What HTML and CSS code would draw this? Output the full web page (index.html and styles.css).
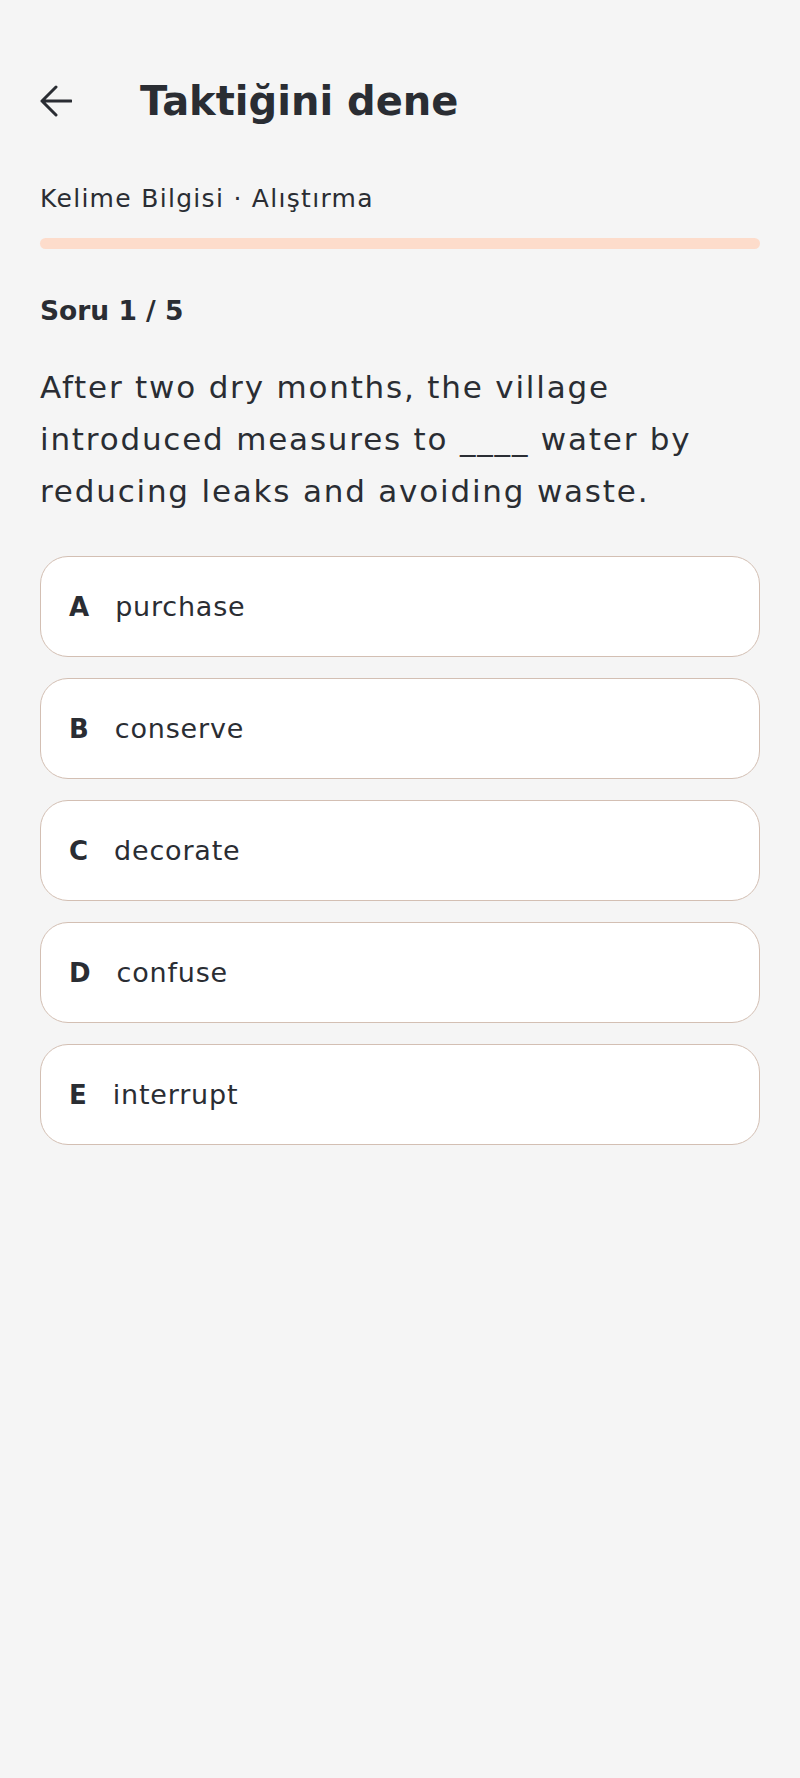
FILE: index.html
```html
<!DOCTYPE html>
<html lang="tr">
<head>
    <meta charset="UTF-8">
    <meta name="viewport" content="width=device-width, initial-scale=1.0">
    <title>Taktiğini dene</title>
    <link rel="stylesheet" href="styles.css">
</head>
<body>
    <div class="screen">
        <header class="topbar">
            <button class="back-btn" aria-label="Geri">
                <svg width="32" height="32" viewBox="0 0 32 32" fill="none" stroke="currentColor" stroke-width="3" stroke-linecap="round" stroke-linejoin="round">
                    <path d="M31 16H2M16 2L2 16l14 14"/>
                </svg>
            </button>
            <h1>Taktiğini dene</h1>
        </header>

        <p class="subtitle">Kelime Bilgisi · Alıştırma</p>
        <div class="progress"><div class="progress-fill" style="width: 0%"></div></div>

        <h2 class="counter">Soru 1 / 5</h2>
        <p class="question">After two dry months, the village introduced measures to ____ water by reducing leaks and avoiding waste.</p>

        <div class="options">
            <button class="option"><span class="option-key">A</span><span class="option-text">purchase</span></button>
            <button class="option"><span class="option-key">B</span><span class="option-text">conserve</span></button>
            <button class="option"><span class="option-key">C</span><span class="option-text">decorate</span></button>
            <button class="option"><span class="option-key">D</span><span class="option-text">confuse</span></button>
            <button class="option"><span class="option-key">E</span><span class="option-text">interrupt</span></button>
        </div>
    </div>
</body>
</html>
```

FILE: styles.css
```css
:root {
    --bg: #f5f5f5;
    --text: #2a2d33;
    --line: #d3bfb3;
    --peach: #fddccb;
}

body {
    margin: 0;
    background: var(--bg);
    color: var(--text);
    font-family: 'DejaVu Sans', 'Noto Sans', sans-serif;
    min-height: 100vh;
}

.screen {
    padding: 71px 40px 40px;
}

.topbar {
    display: flex;
    align-items: center;
    height: 60px;
}

.back-btn {
    display: flex;
    align-items: center;
    padding: 0;
    margin: 0 68px 0 0;
    border: none;
    background: none;
    color: var(--text);
    width: 32px;
    height: 32px;
}

h1 {
    margin: 0;
    font-size: 40px;
    font-weight: 700;
}

.subtitle {
    margin: 50px 0 0;
    font-size: 25px;
    line-height: 36px;
    letter-spacing: 1.3px;
}

.progress {
    margin-top: 21px;
    height: 11px;
    border-radius: 6px;
    background: var(--peach);
    overflow: hidden;
}

.progress-fill {
    height: 100%;
    background: #f3a47f;
}

.counter {
    margin: 42px 0 0;
    font-size: 26.5px;
    font-weight: 700;
    line-height: 40px;
}

.question {
    margin: 30px 0 0;
    font-size: 31px;
    line-height: 52px;
    letter-spacing: 1.8px;
}

.options {
    display: flex;
    flex-direction: column;
    gap: 21px;
    margin-top: 39px;
}

.option {
    display: flex;
    align-items: center;
    gap: 26px;
    height: 101px;
    padding: 0 28px;
    border: 1.5px solid var(--line);
    border-radius: 28px;
    background: #fff;
    color: var(--text);
    font-family: inherit;
    text-align: left;
}

.option-key {
    font-size: 26px;
    font-weight: 700;
}

.option-text {
    font-size: 27px;
    letter-spacing: 0.8px;
}
```
